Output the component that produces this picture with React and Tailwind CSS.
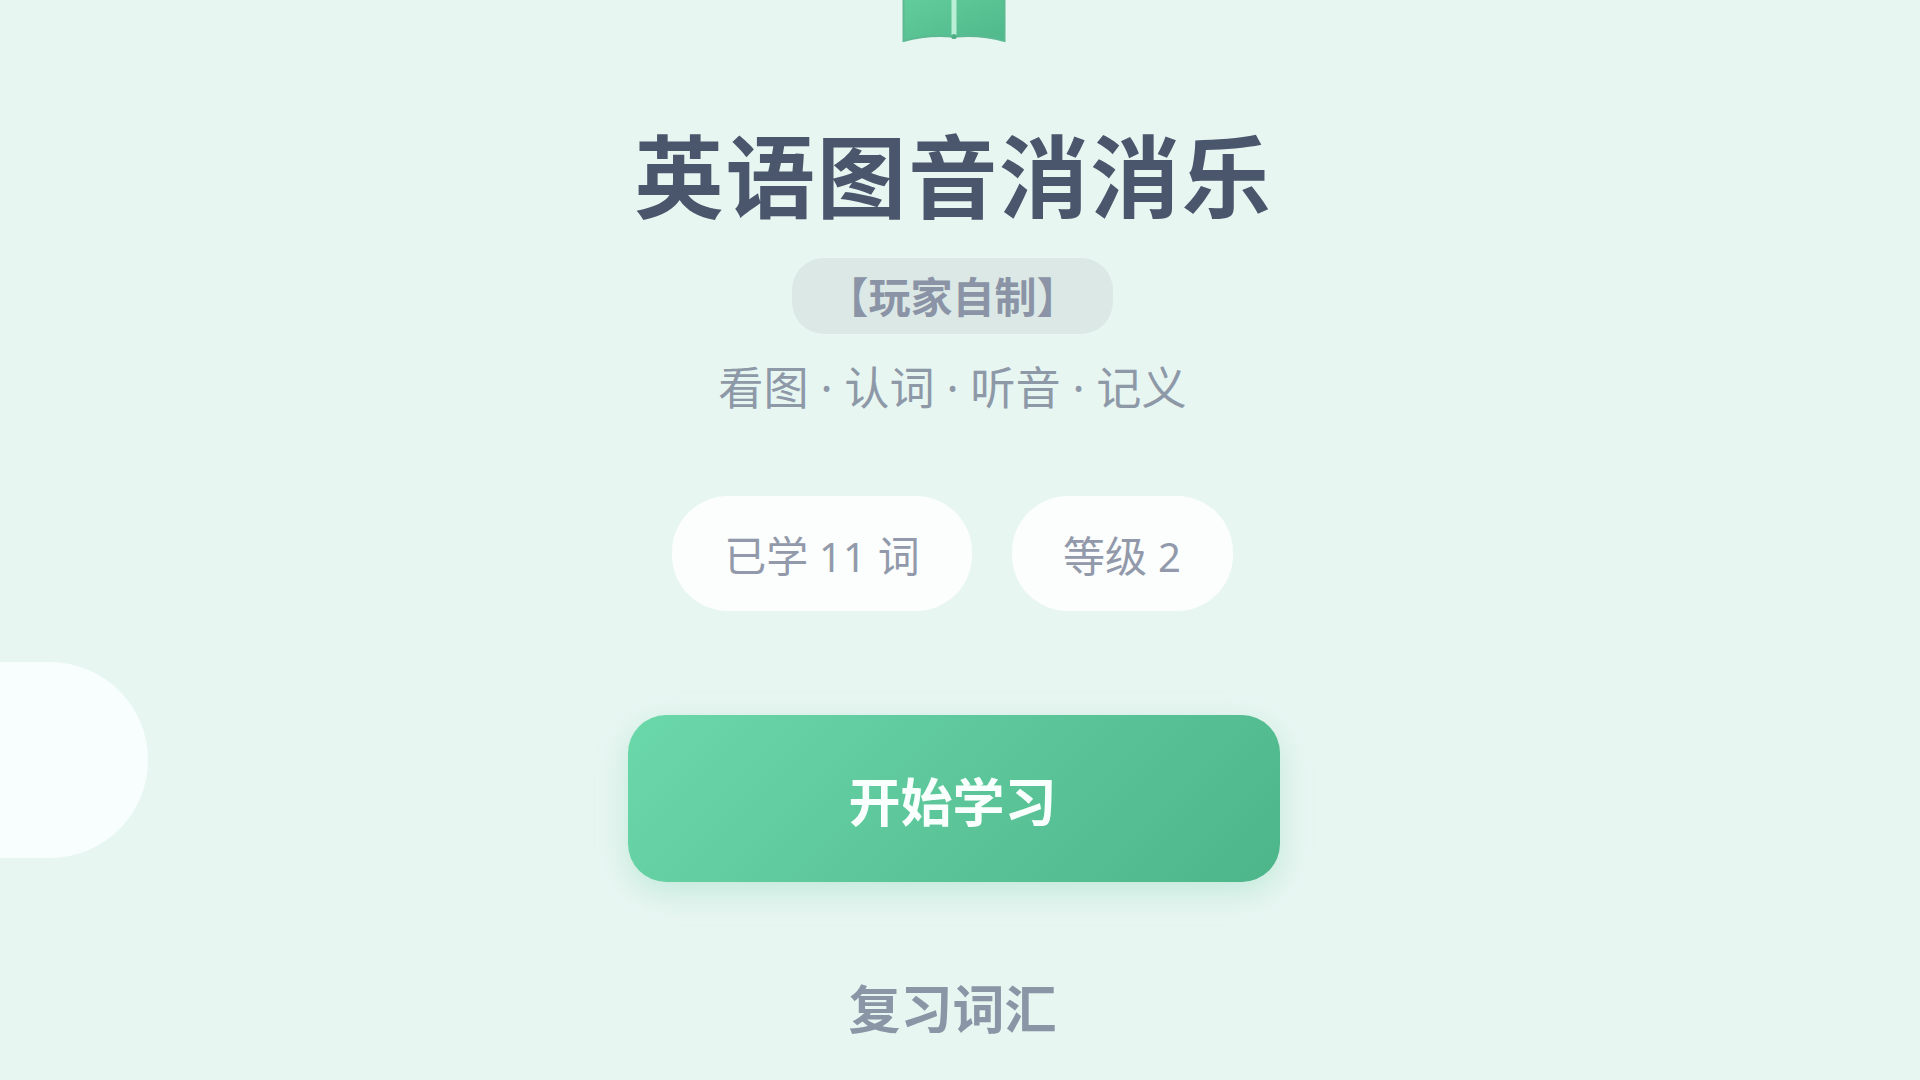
const Book = () => (
  <svg className="block h-[42px] w-[104px]" viewBox="0 0 104 42">
    <defs>
      <linearGradient id="cover" x1="0" y1="0" x2="1" y2="1">
        <stop offset="0" stopColor="#62cd9c" />
        <stop offset="1" stopColor="#50b88b" />
      </linearGradient>
    </defs>
    <path
      d="M1.500 -2V41Q25 34.500 49.500 36.500Q52 39.500 54.500 36.500Q79 34.500 102.500 41V-2Z"
      fill="url(#cover)"
      stroke="#5cba92"
      strokeWidth="2"
    />
    <path d="M52 -2V35" stroke="#b9efd6" strokeWidth="5" />
    <circle cx="52" cy="36.500" r="2.500" fill="#4fae88" />
  </svg>
);

const Stat = ({ children, className }) => (
  <div
    className={`flex h-[115px] items-center justify-center rounded-[56px] bg-[#fbfefd] pt-[3px] text-[42px] text-[#9299aa] ${className}`}
  >
    <span>{children}</span>
  </div>
);

const Digits = ({ children }) => (
  <span className="text-[40px] tracking-[1px]">{children}</span>
);

export default function App() {
  return (
    <main className="relative h-[1080px] w-[1920px] overflow-hidden bg-[#e8f6f2] font-['Noto_Sans','Noto_Sans_CJK_SC',sans-serif] whitespace-nowrap">
      <div className="absolute top-[662px] -left-[100px] h-[196px] w-[248px] rounded-full bg-[#f7fefd]" />
      <div className="relative flex w-[1905px] flex-col items-center">
        <div className="pl-0.5">
          <Book />
        </div>
        <h1 className="mt-[78px] h-[112px] pl-0.5 text-[89.500px] leading-[112px] font-bold tracking-[1.700px] text-[#4a566b]">
          英语图音消消乐
        </h1>
        <div className="mt-[26px] flex h-[76px] w-[321px] items-center justify-center rounded-[32px] bg-[#dce8e5] pt-0.5 text-[42px] leading-none font-bold text-[#8a94a6]">
          【玩家自制】
        </div>
        <p className="mt-[22px] h-[64px] text-[45.200px] leading-[64px] text-[#8e99a8]">
          看图 · 认词 · 听音 · 记义
        </p>
        <div className="mt-[76px] flex gap-[40px]">
          <Stat className="w-[300px]">
            已学 <Digits>11</Digits> 词
          </Stat>
          <Stat className="w-[221px]">
            等级 <Digits>2</Digits>
          </Stat>
        </div>
        <div className="mt-[104px] pl-0.5">
          <button className="flex h-[167px] w-[652px] items-center justify-center rounded-[38px] bg-linear-135 from-[#6bd8aa] to-[#4db58a] pt-[7px] pr-0.5 text-[52px] font-bold text-[#f8fffc] shadow-[0_10px_32px_rgba(92,200,155,0.27)]">
            开始学习
          </button>
        </div>
        <button className="mt-[87px] h-[80px] text-[52px] leading-[80px] font-bold text-[#8a95a6]">
          复习词汇
        </button>
      </div>
    </main>
  );
}
